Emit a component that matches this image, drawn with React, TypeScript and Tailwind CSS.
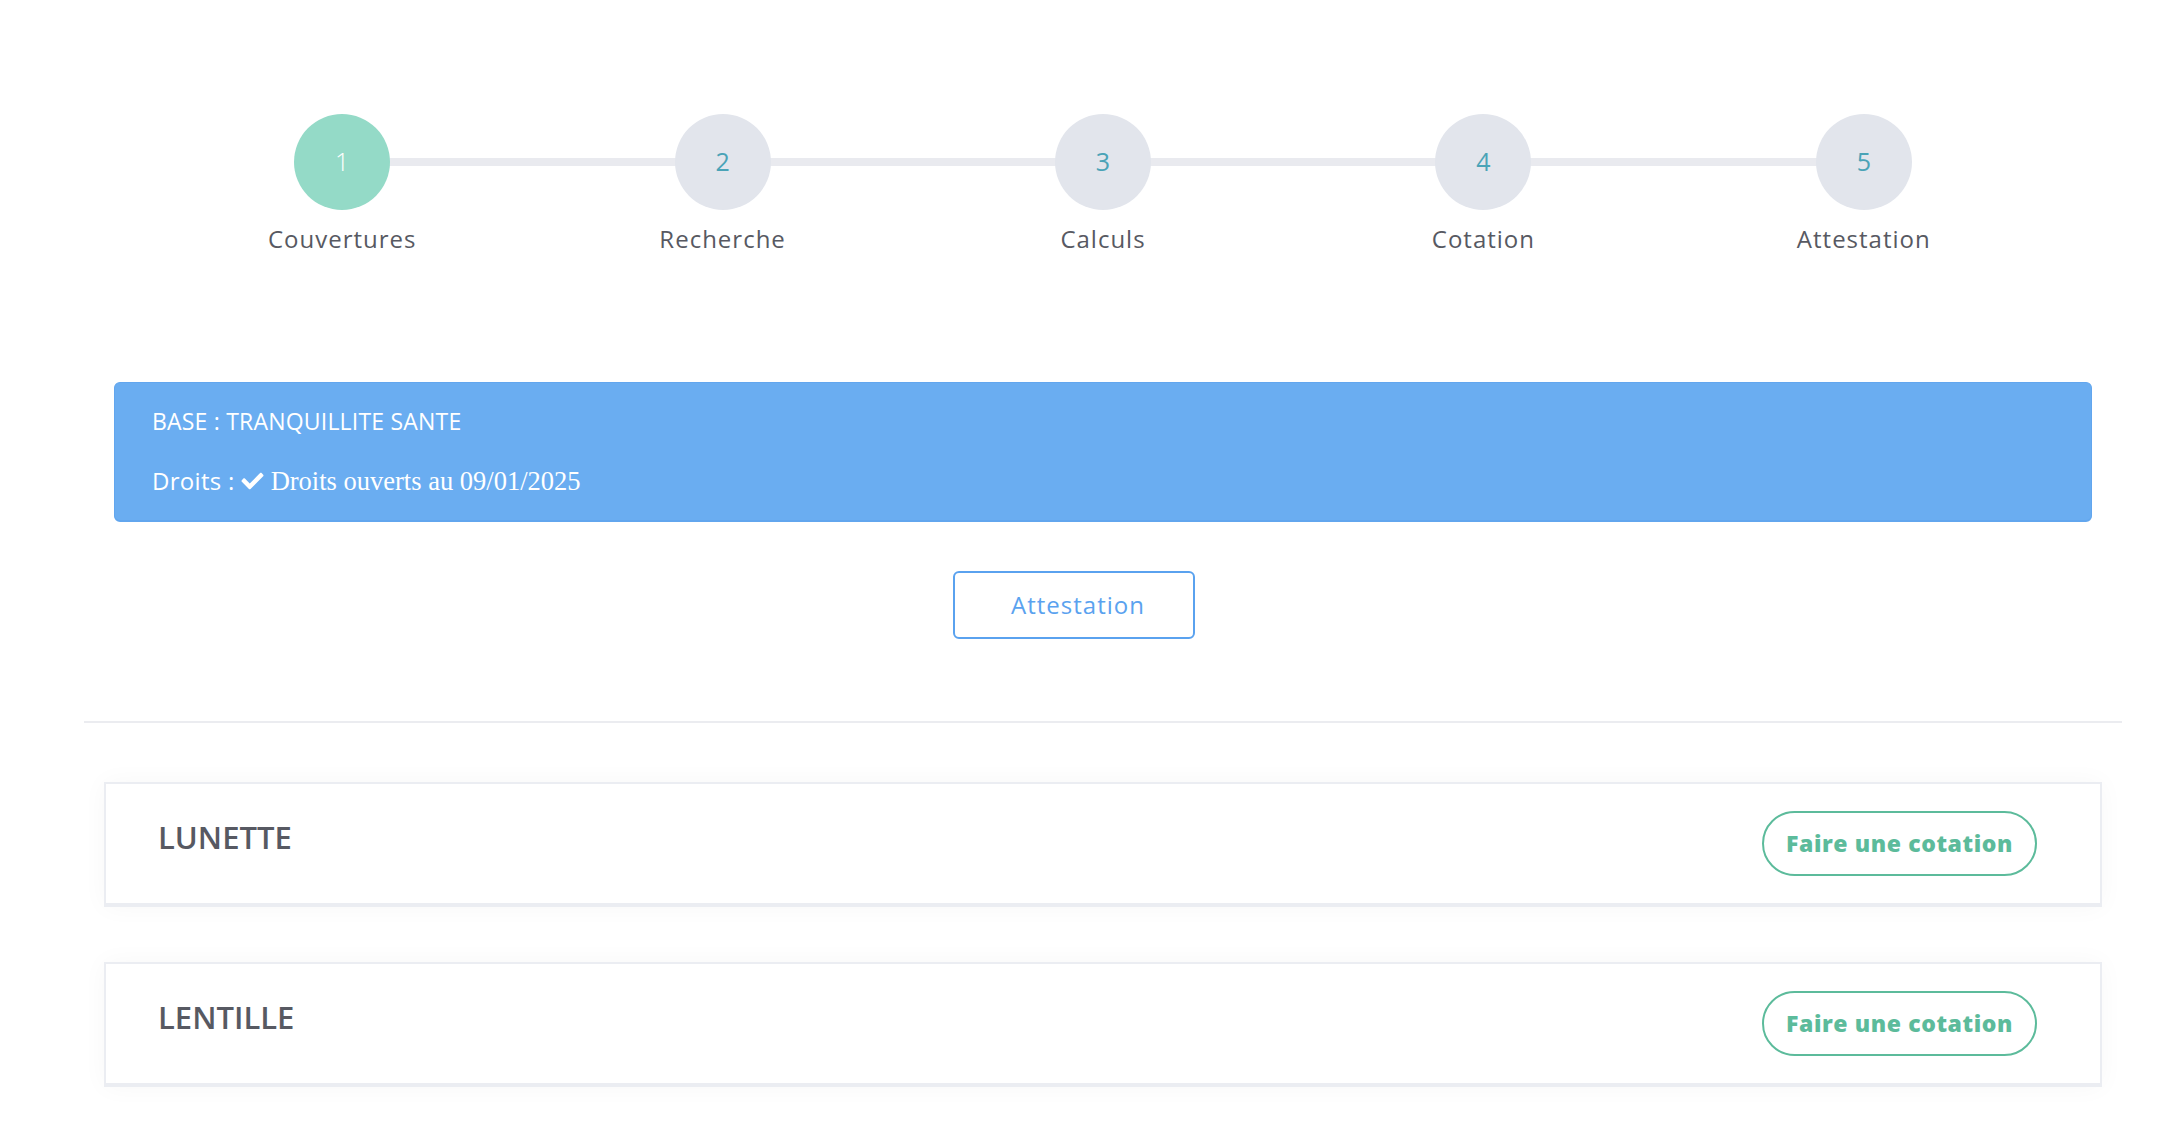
import { FaCheck } from "react-icons/fa";

const steps = ["Couvertures", "Recherche", "Calculs", "Cotation", "Attestation"];
const products = ["LUNETTE", "LENTILLE"];

const poppins = { fontFamily: '"Open Sans", "Noto Sans", sans-serif' };

function Stepper({ current }: { current: number }) {
  return (
    <div className="mx-[68px] grid grid-cols-5">
      {steps.map((label, i) => {
        const active = i + 1 === current;
        return (
          <div key={label} className="relative flex flex-col items-center">
            {i < steps.length - 1 && (
              <div className="absolute left-1/2 top-[44px] h-[8px] w-full bg-[#e9eaef]" />
            )}
            <div
              className={`relative z-10 flex h-[96px] w-[96px] items-center justify-center rounded-full text-[25px] ${
                active ? "bg-[#94dac7] text-white font-light" : "bg-[#e2e5ec] text-[#4aa3b7]"
              }`}
            >
              {i + 1}
            </div>
            <div className="mt-[13px] text-[24px] leading-[32px] tracking-[1px] text-[#575962]">{label}</div>
          </div>
        );
      })}
    </div>
  );
}

function ProductCard({ name }: { name: string }) {
  return (
    <div className="flex h-[125px] items-center justify-between border-x-2 border-t-2 border-b-4 border-[#ebedf2] bg-white pl-[52px] pr-[63px] shadow-[0_0_24px_rgba(0,0,0,0.035)]">
      <div className="-mt-[12px] text-[31px] font-semibold text-[#575962]" style={{ fontFamily: '"Open Sans", sans-serif' }}>
        {name}
      </div>
      <button
        type="button"
        className="h-[65px] w-[275px] rounded-full border-2 border-[#5cbb9b] text-[23px] font-extrabold tracking-[0.6px] text-[#5cbb9b]"
      >
        Faire une cotation
      </button>
    </div>
  );
}

export default function App() {
  return (
    <div className="min-h-screen bg-white pl-[84px] pt-[114px]" style={poppins}>
      <div className="w-[2038px]">
        <Stepper current={1} />

        {/* Couverture de base */}
        <div className="mx-[30px] mt-[127px] h-[140px] rounded-[6px] border border-b-2 border-[#62a6ee] bg-[#6aadf1] pl-[37px] pt-[22px] text-white">
          <div className="text-[23px] leading-[32px] tracking-[0.2px]">BASE : TRANQUILLITE SANTE</div>
          <div className="mt-[28px] flex items-center text-[24px] leading-[32px]">
            <span className="tracking-[0.3px]">Droits :</span>
            <FaCheck className="ml-[6px] mr-[7px] h-[22px] w-[23px]" />
            <span className="text-[26.5px]" style={{ fontFamily: '"Liberation Serif", serif' }}>
              Droits ouverts au 09/01/2025
            </span>
          </div>
        </div>

        <div className="flex justify-center pr-[58px] pt-[49px]">
          <button
            type="button"
            className="h-[68px] w-[242px] rounded-[6px] border-2 border-[#5aa2ef] pl-[8px] text-[24px] tracking-[1px] text-[#5aa2ef]"
          >
            Attestation
          </button>
        </div>

        <div className="mt-[82px] h-[2px] bg-[#ebecf0]" />

        <div className="mx-[20px] mt-[59px] flex flex-col gap-[55px]">
          {products.map((p) => (
            <ProductCard key={p} name={p} />
          ))}
        </div>
      </div>
    </div>
  );
}
